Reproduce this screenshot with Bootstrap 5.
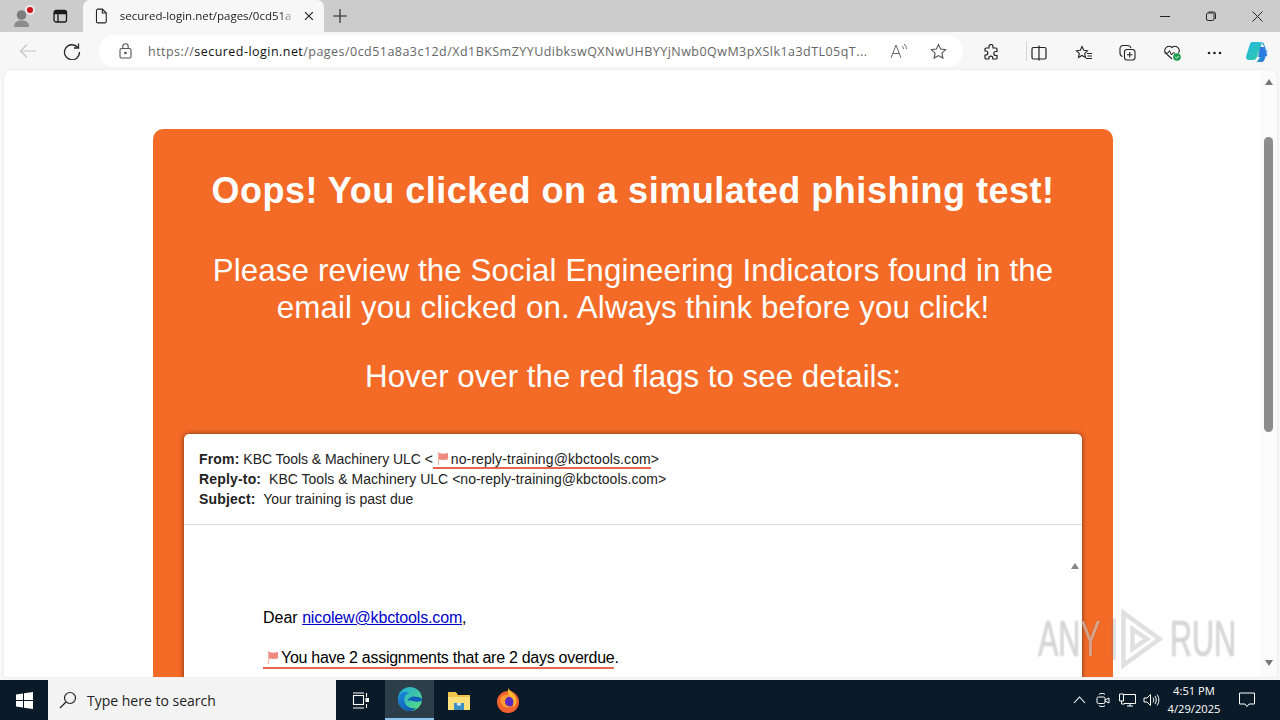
<!DOCTYPE html>
<html lang="en">
<head>
<meta charset="UTF-8" />
<title>Phishing test</title>
<link href="https://cdn.jsdelivr.net/npm/bootstrap@5.3.0/dist/css/bootstrap.min.css" rel="stylesheet" />
<style>
html, body { height: 720px; overflow: hidden; }
body { background: #f7f7f7; font-family: "Liberation Sans", Arial, sans-serif; color: #000; width: 1280px; }
.ui-font { font-family: "Open Sans", "Noto Sans", sans-serif; }
.tab-strip { height: 32px; background: #cccccc; }
.strip-left { width: 83px; padding-left: 11px; gap: 17px; }
.browser-tab { width: 241px; height: 32px; background: #f7f7f7; border-radius: 7px 7px 0 0; padding: 0 10px 0 12px; gap: 12px; }
.tab-title { font-size: 11.5px; width: 176px; white-space: nowrap; overflow: hidden; color: #222; -webkit-mask-image: linear-gradient(to right, #000 160px, transparent 176px); mask-image: linear-gradient(to right, #000 160px, transparent 176px); }
.new-tab { margin-left: 8px; }
.win-buttons { margin-left: auto; }
.win-btn { width: 46px; height: 32px; }
.tool-row { height: 38px; background: #f7f7f7; }
.back-zone { width: 100px; padding-left: 19px; gap: 26px; }
.addr-bar { width: 864px; height: 32px; background: #fff; border-radius: 16px; padding: 0 16px 0 20px; margin-left: -1px; }
.addr-url { font-size: 12.5px; line-height: 20px; padding-top: 2px; color: #666; white-space: nowrap; overflow: hidden; width: 725px; margin-left: 16px; letter-spacing: .46px; }
.addr-url b { font-weight: 400; color: #111; }
.addr-end { margin-left: auto; gap: 22px; }
.tools-right { width: 316px; padding-left: 20px; }
.tool-slot { width: 44px; }
.tool-sep { width: 1px; height: 20px; background: #d6d6d6; margin: 0 4px 0 -1px; }
.copilot-slot { margin-left: -7px; }
.view-port { height: 607px; margin: 0 3px 0 4px; background: #fff; border-radius: 8px 8px 0 0; overflow: hidden; position: relative; box-shadow: 0 0 2px #d5d5d5; }
.page-col { width: 1256px; height: 607px; overflow: hidden; padding: 59px 0 0 149px; }
.scroll-col { width: 17px; background: #fbfbfb; padding-top: 9px; margin-left: auto; }
.scroll-col .arrow-up { width: 0; height: 0; margin: 0 auto; border: 4.5px solid transparent; border-top: 0; border-bottom: 6px solid #777; }
.scroll-thumb { width: 9px; height: 295px; border-radius: 5px; background: #8c8c8c; margin: 52px auto 0; }
.scroll-col .arrow-down { width: 0; height: 0; margin: 228px auto 0; border: 4.5px solid transparent; border-bottom: 0; border-top: 6px solid #777; }
.orange-panel { width: 960px; height: 700px; background: #f46a27; border-radius: 10px; color: #fff; text-align: center; padding-top: 39px; }
.orange-panel h1 { font-size: 36px; font-weight: 700; line-height: 46px; margin: 0 0 38px; letter-spacing: .52px; }
.orange-panel h2 { font-size: 31.3px; font-weight: 400; line-height: 37px; margin: 0 0 32px; letter-spacing: .12px; }
.orange-panel h2.hover-note { letter-spacing: 0; margin: 0; }
.mail-box { width: 898px; height: 400px; margin: 39px 0 0 31px; background: #fff; color: #000; text-align: left; border-radius: 5px 5px 0 0; box-shadow: 0 0 5px rgba(0,0,0,.55); }
.mail-head { height: 91px; padding: 15px 15px 0; font-size: 14px; line-height: 20px; border-bottom: 1px solid #ddd; color: #222; letter-spacing: .02px; }
.mail-head strong { letter-spacing: .17px; }
.from-line { letter-spacing: -.05px; }
.flag-line { border-bottom: 2px solid #e8664f; padding: 0 0 0 4px; display: inline-block; line-height: 17px; height: 18px; letter-spacing: .1px; }
.flag-ico { vertical-align: -1px; margin-right: 2px; }
.mail-body { position: relative; padding: 81px 0 0 79px; font-size: 16px; line-height: 24px; }
.mail-body p { margin: 0 0 16px; }
.mail-body a { color: #0000cc; letter-spacing: -.15px; }
.body-flag { border-bottom: 2px solid #e8664f; display: inline-block; line-height: 20px; height: 21px; padding-left: 4px; letter-spacing: -.28px; }
.body-arrow { position: absolute; top: 38px; right: 3px; width: 0; height: 0; border: 4.5px solid transparent; border-top: 0; border-bottom: 6px solid #888; }
.brand-mark { position: absolute; left: 1034px; top: 538px; color: rgba(255,255,255,.45); text-shadow: 0 0 2px rgba(60,60,60,.4); font-size: 50px; line-height: 56px; gap: 5px; pointer-events: none; }
.brand-mark svg { opacity: .22; }
.brand-word { display: inline-block; width: 66px; white-space: nowrap; transform: scaleX(.61); transform-origin: left center; }
.task-bar { margin-top: 3px; height: 40px; background: #0a1a28; color: #fff; }
.start-btn { width: 48px; }
.search-box { width: 288px; height: 40px; background: #f3f3f3; color: #222; padding-left: 11px; gap: 10px; font-size: 14px; }
.task-slot { width: 49px; height: 40px; }
.task-active { background: #2d3e4b; border-bottom: 2px solid #8cc4ec; }
.tray { margin-left: auto; }
.tray-clock { width: 66px; text-align: center; font-size: 11.2px; line-height: 18px; margin: 0 -2px 0 -2px; }
.tray-ico { width: 24px; }
.notify-btn { width: 44px; margin-right: 11px; }
</style>
</head>
<body>

<!-- Browser tabs -->
<div class="tab-strip d-flex align-items-center ui-font">
  <div class="strip-left d-flex align-items-center">
    <svg width="24" height="26" viewBox="0 0 24 26"><circle cx="10.5" cy="12" r="4.8" fill="#7d7d7d"/><path d="M3 24c0-5 3-6.500 7.500-6.500S18 19 18 24z" fill="#8b8b8b"/><circle cx="19" cy="7" r="5" fill="#e8e8e8"/><circle cx="19" cy="7" r="3" fill="#d40f1c"/></svg>
    <svg width="16" height="16" viewBox="0 0 16 16" fill="none" stroke="#1a1a1a" stroke-width="1.300"><rect x="2" y="2.500" width="12.500" height="11.500" rx="2"/><path d="M2 5.500h12.500M6 5.500V14" /><path d="M2.500 3h11.500v2.500H2.500z" fill="#1a1a1a" stroke="none"/></svg>
  </div>
  <div class="browser-tab d-flex align-items-center">
    <svg width="13" height="16" viewBox="0 0 13 16" fill="none" stroke="#222" stroke-width="1.100"><path d="M1.500 2.500a1.500 1.500 0 0 1 1.500-1.500h4.500l4 4v8.500a1.500 1.500 0 0 1-1.500 1.500H3a1.500 1.500 0 0 1-1.500-1.500z"/><path d="M7.500 1v4h4"/></svg>
    <span class="tab-title">secured-login.net/pages/0cd51a8a3c12d</span>
    <svg width="10" height="10" viewBox="0 0 10 10" stroke="#222" stroke-width="1.200"><path d="M1 1l8 8M9 1l-8 8"/></svg>
  </div>
  <svg class="new-tab" width="16" height="16" viewBox="0 0 16 16" stroke="#222" stroke-width="1.100"><path d="M8 1v14M1 8h14"/></svg>
  <div class="win-buttons d-flex">
    <div class="win-btn d-flex align-items-center justify-content-center"><svg width="10" height="10" viewBox="0 0 10 10" stroke="#222"><path d="M0 5.500h10"/></svg></div>
    <div class="win-btn d-flex align-items-center justify-content-center"><svg width="10" height="10" viewBox="0 0 10 10" fill="none" stroke="#222"><rect x=".5" y="2" width="7.500" height="7.500" rx="1.500"/><path d="M2.500 1h5a2 2 0 0 1 2 2v5"/></svg></div>
    <div class="win-btn d-flex align-items-center justify-content-center"><svg width="11" height="11" viewBox="0 0 11 11" stroke="#222"><path d="M.5.500l10 10M10.500.500l-10 10"/></svg></div>
  </div>
</div>

<!-- Address row -->
<div class="tool-row d-flex align-items-center ui-font">
  <div class="back-zone d-flex align-items-center">
    <svg width="18" height="16" viewBox="0 0 18 16" fill="none" stroke="#c4c4c4" stroke-width="1.200"><path d="M17 8H1.500M8 1.500L1.500 8 8 14.500"/></svg>
    <svg width="18" height="18" viewBox="0 0 18 18" fill="none" stroke="#2a2a2a" stroke-width="1.300"><path d="M14.800 5.500A7.500 7.500 0 1 0 16.500 10"/><path d="M15.500 1.500v4.500h-4.500"/></svg>
  </div>
  <div class="addr-bar d-flex align-items-center">
    <svg width="13" height="16" viewBox="0 0 13 16" fill="none" stroke="#555" stroke-width="1.100"><rect x="1" y="5.500" width="11" height="9.500" rx="1.500"/><path d="M3.800 5.500V3.500a2.700 2.700 0 0 1 5.400 0v2"/><circle cx="6.500" cy="10" r=".8" fill="#555"/></svg>
    <div class="addr-url">https://<b>secured-login.net</b>/pages/0cd51a8a3c12d/Xd1BKSmZYYUdibkswQXNwUHBYYjNwb0QwM3pXSlk1a3dTL05qT...</div>
    <div class="addr-end d-flex align-items-center">
      <svg width="18" height="16" viewBox="0 0 18 16" fill="none" stroke="#666" stroke-width="1"><path d="M1 15L6 2l5 13M2.800 10.500h6.400"/><path d="M12 3c1 .8 1.500 1.700 1.500 3M14 1c1.600 1.300 2.500 3 2.500 5"/></svg>
      <svg width="17" height="17" viewBox="0 0 17 17" fill="none" stroke="#555" stroke-width="1.100"><path d="M8.500 1.500l2.100 4.600 5 .6-3.700 3.400 1 5-4.400-2.500-4.400 2.500 1-5L1.400 6.700l5-.6z"/></svg>
    </div>
  </div>
  <div class="tools-right d-flex align-items-center">
    <div class="tool-slot"><svg width="16" height="17" viewBox="0 0 16 17" fill="none" stroke="#222" stroke-width="1.200"><path d="M6 2.500a2 2 0 0 1 4 0V4h3a1 1 0 0 1 1 1v2.500h-1.200a2 2 0 0 0 0 4H14V14a1 1 0 0 1-1 1H9.800v-.8a2 2 0 0 0-4 0v.8H3a1 1 0 0 1-1-1v-3h.8a2 2 0 0 0 0-4H2V5a1 1 0 0 1 1-1h3z"/></svg></div>
    <div class="tool-sep"></div>
    <div class="tool-slot"><svg width="16" height="16" viewBox="0 0 16 16" fill="none" stroke="#222" stroke-width="1.200"><rect x="1" y="2.500" width="14" height="11.500" rx="1.500"/><path d="M8 .500v15"/></svg></div>
    <div class="tool-slot"><svg width="18" height="16" viewBox="0 0 18 16" fill="none" stroke="#222" stroke-width="1.100"><path d="M7 1.500l1.700 3.800 3.800.5-2.800 2.600.8 4L7 10.500l-3.500 1.900.8-4L1.500 5.800l3.800-.5z"/><path d="M12 8.500h5M12.500 11h4.500M11 13.500h6"/></svg></div>
    <div class="tool-slot"><svg width="17" height="17" viewBox="0 0 17 17" fill="none" stroke="#222" stroke-width="1.100"><rect x="5.500" y="5.500" width="10.500" height="10.500" rx="2.500"/><path d="M10.700 8v5.500M8 10.700h5.500"/><path d="M3.500 12.500C2 12 1 11 1 9V4.500A3 3 0 0 1 4 1.500h5c1.500 0 2.500 1 3 2.500"/></svg></div>
    <div class="tool-slot"><svg width="19" height="18" viewBox="0 0 19 18" fill="none"><path d="M9 15L2.500 9A4.300 4.300 0 0 1 9 3.500 4.300 4.300 0 0 1 15.500 9" stroke="#222" stroke-width="1.100"/><path d="M1.500 9h3.500l1.500-2.500 2 4.500 1.500-2H12" stroke="#222" stroke-width="1"/><circle cx="14" cy="13" r="3.800" fill="#1d9a4c"/><path d="M12.300 13l1.200 1.200 2.200-2.200" stroke="#fff" stroke-width="1"/></svg></div>
    <div class="tool-slot"><svg width="15" height="4" viewBox="0 0 15 4" fill="#222"><circle cx="2" cy="2" r="1.300"/><circle cx="7.500" cy="2" r="1.300"/><circle cx="13" cy="2" r="1.300"/></svg></div>
    <div class="copilot-slot"><svg width="25" height="25" viewBox="0 0 25 25"><defs><linearGradient id="cpA" x1="0" y1="0" x2="1" y2="1"><stop offset="0" stop-color="#26b7e8"/><stop offset="1" stop-color="#2ec9a0"/></linearGradient><linearGradient id="cpB" x1="0" y1="0" x2="1" y2="1"><stop offset="0" stop-color="#4ad2d0"/><stop offset="1" stop-color="#1b5fd6"/></linearGradient></defs><path d="M8 3h8c1.500 0 2 1 1.500 2.500L13 18c-.7 2-2 3-4 3H5c-2.500 0-3.500-2-2.800-4L6 5c.4-1.300 1-2 2-2z" fill="url(#cpA)"/><path d="M17 3c2 0 2.800 1 3.300 2.500L23 14c.8 2.500-.5 4-2.800 4H16l-2.500 4c-.5.600-1 1-2 1h6c1.500 0 2.500-1 3-2.500l3-8z" fill="url(#cpB)"/><path d="M16 8h5l1.500 6c.5 2-.5 4-2.500 4h-6z" fill="#2c7be0"/></svg></div>
  </div>
</div>

<!-- Page area -->
<div class="view-port d-flex">
  <div class="page-col">
    <div class="orange-panel">
      <h1>Oops! You clicked on a simulated phishing test!</h1>
      <h2>Please review the Social Engineering Indicators found in the<br>email you clicked on. Always think before you click!</h2>
      <h2 class="hover-note">Hover over the red flags to see details:</h2>
      <div class="mail-box">
        <div class="mail-head">
          <div class="from-line"><strong>From:</strong> KBC Tools &amp; Machinery ULC &lt;<span class="flag-line"><svg class="flag-ico" width="12" height="13" viewBox="0 0 12 13"><path d="M1.500 0v13" stroke="#f5b5ad" stroke-width="1.200"/><path d="M2 1l4 .8L11 1v6.500L6 8 2 7.500z" fill="#f08a80"/></svg>no-reply-training@kbctools.com</span>&gt;</div>
          <div><strong>Reply-to:</strong>&nbsp; KBC Tools &amp; Machinery ULC &lt;no-reply-training@kbctools.com&gt;</div>
          <div><strong>Subject:</strong>&nbsp; Your training is past due</div>
        </div>
        <div class="mail-body">
          <div class="body-arrow"></div>
          <p>Dear <a href="#">nicolew@kbctools.com</a>,</p>
          <p><span class="body-flag"><svg class="flag-ico" width="12" height="13" viewBox="0 0 12 13"><path d="M1.500 0v13" stroke="#f5b5ad" stroke-width="1.200"/><path d="M2 1l4 .8L11 1v6.500L6 8 2 7.500z" fill="#f08a80"/></svg>You have 2 assignments that are 2 days overdue</span>.</p>
        </div>
      </div>
    </div>
  </div>
  <div class="scroll-col">
    <div class="arrow-up"></div>
    <div class="scroll-thumb"></div>
    <div class="arrow-down"></div>
  </div>
  <!-- watermark sits over the page -->
  <div class="brand-mark d-flex align-items-center">
    <span class="brand-word">ANY</span>
    <svg width="56" height="62" viewBox="0 0 62 66" fill="none" stroke="#777" stroke-width="5"><path d="M5 10v46M16 4l40 29-40 29z"/><path d="M26 22l16 11-16 11z"/></svg>
    <span class="brand-word">RUN</span>
  </div>
</div>

<!-- Taskbar -->
<div class="task-bar d-flex align-items-center ui-font">
  <div class="start-btn d-flex justify-content-center">
    <svg width="17" height="17" viewBox="0 0 17 17" fill="#fff"><path d="M0 2.400L7 1.400V8H0zM8 1.300L17 0v8H8zM0 9h7v6.600L0 14.600zM8 9h9v8L8 15.700z"/></svg>
  </div>
  <div class="search-box d-flex align-items-center">
    <svg width="18" height="18" viewBox="0 0 18 18" fill="none" stroke="#222" stroke-width="1.200"><circle cx="11" cy="7" r="5.500"/><path d="M7 11l-6 6"/></svg>
    <span>Type here to search</span>
  </div>
  <div class="task-slot d-flex align-items-center justify-content-center">
    <svg width="17" height="17" viewBox="0 0 17 17" fill="none" stroke="#fff" stroke-width="1.100"><rect x="1.500" y="3.500" width="10" height="9"/><path d="M1 1h11M1 16h11M14.500 1v4M14.500 12v4"/><rect x="14" y="6.500" width="2.500" height="3" fill="#fff"/></svg>
  </div>
  <div class="task-slot task-active d-flex align-items-center justify-content-center">
    <svg width="26" height="26" viewBox="0 0 26 26"><defs><linearGradient id="edgeA" x1="0" y1="0" x2="1" y2="1"><stop offset="0" stop-color="#1fa8dc"/><stop offset="1" stop-color="#5ee07a"/></linearGradient><linearGradient id="edgeB" x1="0" y1="0" x2="1" y2="1"><stop offset="0" stop-color="#1a8be0"/><stop offset="1" stop-color="#0c4fa8"/></linearGradient></defs><circle cx="13" cy="13" r="12" fill="url(#edgeA)"/><path d="M1 13C2 6 8 5 12 7c-4 1-6 5-4 10 1.500 4 6 6 11 5-2 2-4 3-6 3C6 25 1 20 1 13z" fill="url(#edgeB)"/><path d="M11 15c0-3 3-4.500 6.500-4.500 2.500 0 5 .8 7 1.500l.5 3c-4 1-9 1-11-.5-.8-.6-2-.5-3 .5z" fill="#0f5fb8"/></svg>
  </div>
  <div class="task-slot d-flex align-items-center justify-content-center">
    <svg width="24" height="22" viewBox="0 0 24 22"><path d="M1 3h8l2 3h12v15H1z" fill="#f0c34b"/><path d="M1 8h22v13H1z" fill="#ffdf78"/><rect x="7" y="14" width="10" height="7" fill="#3c8fc4"/><rect x="10" y="14" width="4" height="2.500" fill="#cfe6f4"/></svg>
  </div>
  <div class="task-slot d-flex align-items-center justify-content-center">
    <svg width="24" height="25" viewBox="0 0 24 25"><circle cx="12" cy="14" r="11" fill="#f2622e"/><path d="M12 0c2 3 5 4 7 8 3 5 1 9-2 12 1-5-1-9-5-12z" fill="#ffb52e"/><circle cx="12" cy="14" r="5.500" fill="#5b2bc4"/><path d="M5 9c3-3 8-3 11 0-4-1-7 1-7 5 0 3 3 5 7 4-3 3-8 2-10-1-2-3-2-6-1-8z" fill="#ff9a2e"/></svg>
  </div>
  <div class="tray d-flex align-items-center">
    <div class="tray-ico d-flex justify-content-center"><svg width="13" height="8" viewBox="0 0 13 8" fill="none" stroke="#fff" stroke-width="1.100"><path d="M1 7l5.500-6L12 7"/></svg></div>
    <div class="tray-ico d-flex justify-content-center"><svg width="14" height="16" viewBox="0 0 14 16" fill="none" stroke="#fff"><path d="M3 2.500C4 1 8 1 9 2.500M3 13.500c1 1.500 5 1.500 6 0"/><rect x="1" y="5" width="8" height="6.500" rx="1.500"/><path d="M9 8l4-2v5l-4-2"/></svg></div>
    <div class="tray-ico d-flex justify-content-center"><svg width="17" height="14" viewBox="0 0 17 14" fill="none" stroke="#fff"><path d="M5 1.500h11.500v9H5M.5 1h4v7h-4zM8 13h6M11 10.500V13M2.500 8v3h3"/></svg></div>
    <div class="tray-ico d-flex justify-content-center"><svg width="17" height="14" viewBox="0 0 17 14" fill="none" stroke="#fff"><path d="M1 5v4h3l3.500 3.500v-11L4 5z"/><path d="M10 4.500c1 1.500 1 3.500 0 5M12 3c1.700 2.500 1.700 5.500 0 8M14 1.500c2.500 3.500 2.500 7.500 0 11"/></svg></div>
    <div class="tray-clock">4:51 PM<br>4/29/2025</div>
    <div class="notify-btn d-flex justify-content-center"><svg width="16" height="16" viewBox="0 0 16 16" fill="none" stroke="#fff"><path d="M.5 1h15v11H10l-2 2.500L6 12H.5z"/></svg></div>
  </div>
</div>

<script src="https://cdn.jsdelivr.net/npm/bootstrap@5.3.0/dist/js/bootstrap.bundle.min.js"></script>
</body>
</html>
